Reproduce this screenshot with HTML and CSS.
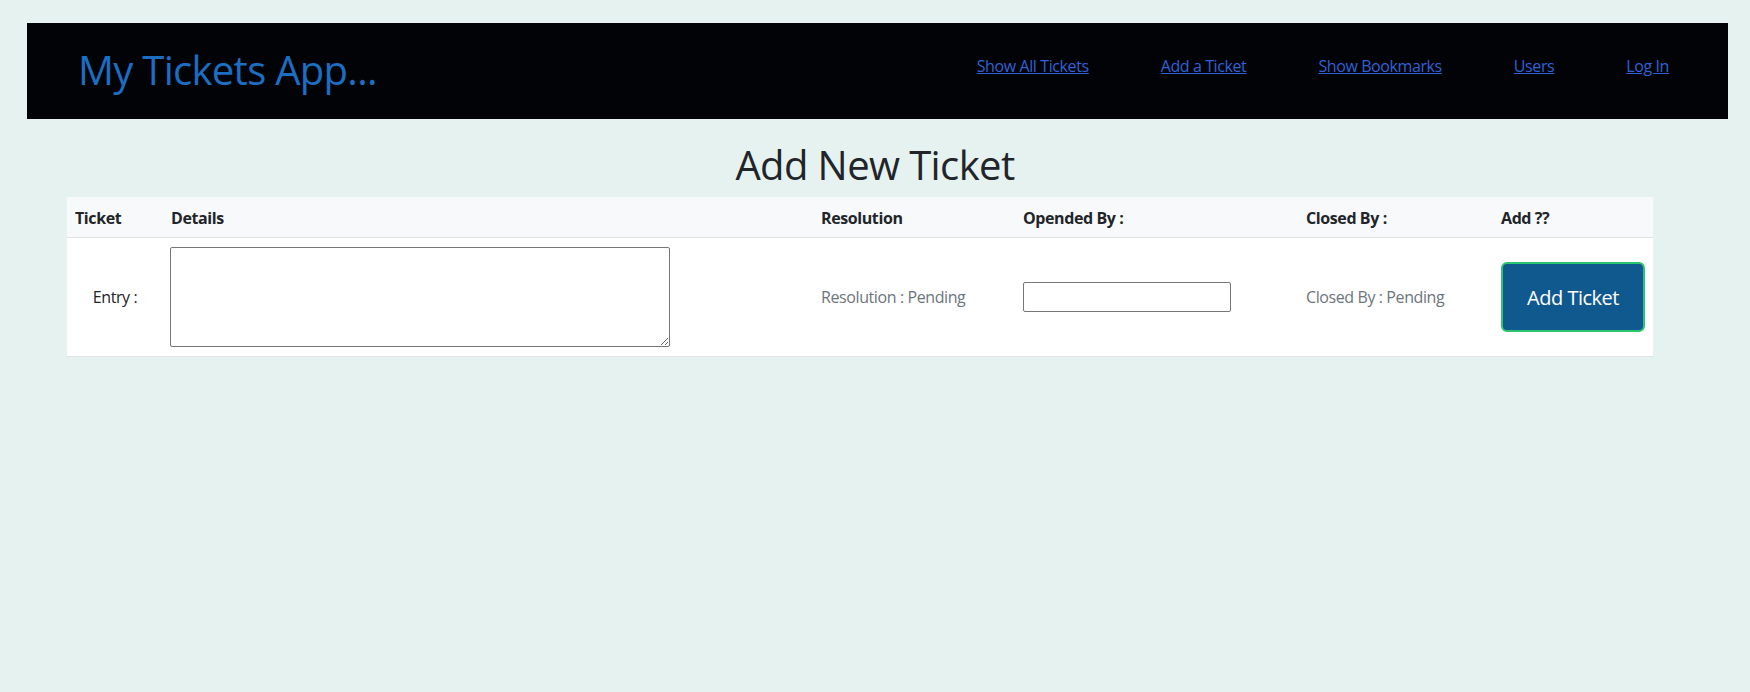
FILE: index.html
```html
<!DOCTYPE html>
<html lang="en">
<head>
<meta charset="utf-8">
<title>My Tickets App</title>
<link rel="stylesheet" href="styles.css">
</head>
<body>
<header class="navbar">
  <div class="brand">My Tickets App...</div>
  <nav class="nav">
    <a href="#">Show All Tickets</a>
    <a href="#">Add a Ticket</a>
    <a href="#">Show Bookmarks</a>
    <a href="#">Users</a>
    <a href="#">Log In</a>
  </nav>
</header>
<main>
  <h1 class="page-title">Add New Ticket</h1>
  <table class="ticket-table">
    <colgroup>
      <col class="c1"><col class="c2"><col class="c3"><col class="c4"><col class="c5"><col class="c6">
    </colgroup>
    <thead>
      <tr>
        <th>Ticket</th>
        <th>Details</th>
        <th>Resolution</th>
        <th>Opended By :</th>
        <th>Closed By :</th>
        <th>Add ??</th>
      </tr>
    </thead>
    <tbody>
      <tr>
        <td class="entry">Entry :</td>
        <td><textarea class="details"></textarea></td>
        <td class="muted">Resolution : Pending</td>
        <td><input class="opened" type="text"></td>
        <td class="muted">Closed By : Pending</td>
        <td><button class="add-btn" type="button">Add Ticket</button></td>
      </tr>
    </tbody>
  </table>
</main>
</body>
</html>
```

FILE: styles.css
```css
* { box-sizing: border-box; }

body {
  margin: 0;
  background: #e6f2f0;
  font-family: "Open Sans", "Noto Sans", "Liberation Sans", sans-serif;
  font-size: 16px;
  letter-spacing: -0.4px;
  color: #212529;
}

.navbar {
  margin: 23px 22px 0 27px;
  height: 96px;
  background: #020306;
  display: flex;
  align-items: center;
  padding-left: 51px;
}

.brand {
  font-size: 40px;
  color: #1b6ec2;
  line-height: 1;
  letter-spacing: -0.7px;
  padding-bottom: 2px;
}

.nav {
  margin-left: auto;
  display: flex;
  gap: 72px;
  padding-right: 59px;
  padding-bottom: 10px;
}

.nav a {
  color: #2f62d8;
  font-size: 16px;
  text-decoration: underline;
}

.page-title {
  margin: 22px 0 8px;
  text-align: center;
  font-size: 40px;
  font-weight: 400;
  line-height: 1.2;
  letter-spacing: -0.6px;
  color: #212529;
}

.ticket-table {
  margin-left: 67px;
  width: 1586px;
  table-layout: fixed;
  border-collapse: collapse;
  background: #fff;
}

.c1 { width: 96px; }
.c2 { width: 650px; }
.c3 { width: 202px; }
.c4 { width: 283px; }
.c5 { width: 195px; }
.c6 { width: 160px; }

.ticket-table th {
  background: #f8f9fa;
  text-align: left;
  font-weight: 700;
  padding: 9px 8px 7px;
  line-height: 24px;
  border-bottom: 1px solid #dee2e6;
}

.ticket-table td {
  padding: 8px;
  height: 119px;
  vertical-align: middle;
  border-bottom: 1px solid #dee2e6;
}

.entry { text-align: center; padding-right: 12px; }

.muted { color: #6c757d; }

.details {
  display: block;
  width: 500px;
  height: 100px;
  margin: -1px 0 0 -1px;
  border: 1px solid #767676;
  border-radius: 2px;
  resize: both;
}

.opened {
  display: block;
  width: 208px;
  height: 30px;
  margin: 0;
  border: 1px solid #767676;
  border-radius: 2px;
}

.add-btn {
  display: block;
  width: 144px;
  height: 70px;
  margin: 0;
  background: #10598f;
  color: #fff;
  border: 2px solid #2bc46f;
  border-radius: 6px;
  font-family: inherit;
  font-size: 20px;
  letter-spacing: -0.5px;
}
```
